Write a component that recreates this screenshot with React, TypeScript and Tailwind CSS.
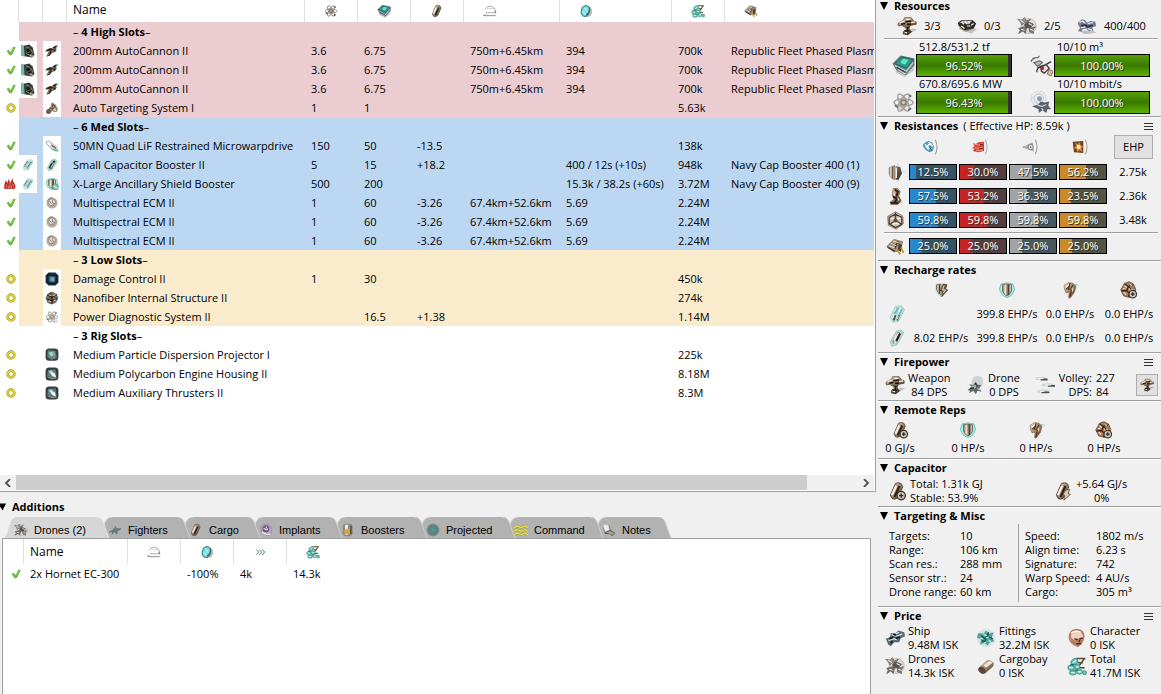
import React from "react";

type Art = Record<string, React.ReactNode>;

const atomArt = (
  <g fill="none" stroke="#8b8781" strokeWidth="1.5">
    <ellipse cx="12" cy="12" rx="10" ry="3.8" />
    <ellipse cx="12" cy="12" rx="10" ry="3.8" transform="rotate(60 12 12)" />
    <ellipse cx="12" cy="12" rx="10" ry="3.8" transform="rotate(120 12 12)" />
    <circle cx="12" cy="12" r="2.6" fill="#d9b999" stroke="#5c554d" />
    <path d="M3 15l3 2M18 4l2 2M17 20l3-2" stroke="#4a4744" strokeWidth="2" />
  </g>
);

const cellArt = (
  <g>
    <path d="M10 3q4-2 7 0l2 4-6 13q-4 3-7 1l-2-4z" fill="url(#bronze)" stroke="#4b4034" />
    <path d="M11 6L6 17" stroke="#f8efe2" strokeWidth="2.6" />
    <path d="M15 6L9 19" stroke="#2b221a" strokeWidth="2.6" />
  </g>
);

const plusBadge = (
  <g>
    <circle cx="17" cy="17.5" r="5" fill="#cfc6bb" stroke="#3c332b" strokeWidth="1.6" />
    <path d="M14.5 17.5h5M17 15v5" stroke="#2d2620" strokeWidth="1.6" />
  </g>
);

const droneArt = (
  <g stroke="#6b6866" fill="#918e8c" strokeWidth="1">
    <circle cx="14" cy="12" r="9" fill="#dedbd9" stroke="#b9b5b2" />
    <path d="M1 4l5 1 3-3 2 4 5-2-3 4-4 0-3 3-2-4z" />
    <path d="M9 10l4-3 7 3-3 3 1 3-5-2-3 2z" fill="#55524f" />
    <path d="M2 15l6-2 3 3-1 5-3-3-5 3 2-4z" fill="#6f6c69" />
    <path d="M15 15l7-2-3 4 1 4-5-2z" fill="#7b7875" />
    <path d="M4 5l4 3M14 9l4 2M5 16l4 1M16 16l3 1" stroke="#f2f0ee" strokeWidth="1.3" />
  </g>
);

const coinsArt = (
  <g>
    <path d="M11 3h10L13 14h8M13 8h6" fill="none" stroke="#554a35" strokeWidth="1.8" />
    <g fill="#5fc4b4" stroke="#3d8d82" strokeWidth="1">
      <ellipse cx="9" cy="7" rx="4.500" ry="3.600" transform="rotate(-35 9 7)" />
      <ellipse cx="5" cy="14" rx="4" ry="3.300" />
      <ellipse cx="12" cy="13" rx="3.400" ry="3" />
      <ellipse cx="7" cy="20" rx="4.200" ry="2.800" />
      <ellipse cx="15" cy="19" rx="3.600" ry="2.800" />
      <ellipse cx="21" cy="20" rx="2.400" ry="2.400" />
    </g>
    <path d="M7 8l4-3M3 14h4M5 20h4M13 19h4M11 13h3" stroke="#e5fffa" strokeWidth="1.4" />
    <path d="M4 11l4-1M9 17h4" stroke="#2a5a53" strokeWidth="1.6" />
  </g>
);

const turretArt = (
  <g>
    <path d="M11 18l8-3 5 1-8 5-8 1z" fill="#000" opacity=".2" />
    <path d="M10 11h6l-1 5 3 3-5 4-6-1 0-3 3-3z" fill="url(#dark)" />
    <path d="M2 8l6-3 1-3 8 0 3 4 3 1 0 3-6 1-3 3-6-1-2-2-4 1-1-2z" fill="url(#bronze)" stroke="#4a3a2b" strokeWidth=".8" />
    <path d="M3 8l6-2M11 4l5 0M17 8l5-1M10 16l3-1M9 19l3 1" stroke="#fff3df" strokeWidth="1.5" />
    <path d="M5 10l5-1M10 7l7-1M12 10l5 0M9 18l5 0M13 13l-1 4" stroke="#1d1712" strokeWidth="1.8" />
  </g>
);

const shieldArt = (
  <g>
    <path d="M4 4q8-3 16 0l2 7q-2 9-10 11-8-2-10-11z" fill="#a9ece8" stroke="#5fc3be" strokeWidth="1.2" />
    <path d="M6 5q6-2 12 0v8q-1 5-6 7-5-2-6-7z" fill="url(#stripes)" stroke="#6d5f4d" />
  </g>
);

const armorArt = (
  <g>
    <path d="M18 5q4-2 6 2" fill="none" stroke="#84cfd6" strokeWidth="1.300" />
    <path d="M4 6l6-4 6 1 4 4-2 8-6 8-2-1 1-7-4 1-2-4z" fill="url(#bronze)" stroke="#7d6448" strokeWidth=".8" />
    <path d="M6 7l5-3-1 6-3 1z" fill="#fbe9d0" />
    <path d="M12 3l-2 8 3 0M16 5l-3 5M14 12l-2 9M7 11l4-4" stroke="#4b3520" strokeWidth="1.5" fill="none" />
    <path d="M16 9l-1 5" stroke="#f3dcc0" strokeWidth="1.5" />
  </g>
);

const hullArt = (
  <g>
    <path d="M6 3l6-2 6 3 3 7-2 7-6 4-8-2-4-8z" fill="#a37f5f" stroke="#5f4632" strokeWidth="1" />
    <path d="M6 4l5 3 7-2M11 7l-2 6-7 0M9 13l4 4 7-4M13 17l-2 4M11 7l4 5" stroke="#3c291b" strokeWidth="1.7" fill="none" />
    <path d="M6 6l3 3M13 5l3 1M5 15l3 3M14 13l3-2M4 10l3 0M12 10l2 3" stroke="#f4d8b8" strokeWidth="1.6" />
  </g>
);

const artwork: Art = {
  check: (
    <>
      <path d="M2 12l4-3 5 6L18 2l5 1-9 18-5 1z" fill="#5aa726" stroke="#9fc68a" strokeWidth="1" />
      <path d="M5 12l6 6L20 4" fill="none" stroke="#86dc4a" strokeWidth="2" />
    </>
  ),
  ring: (
    <>
      <circle cx="12" cy="12" r="8" fill="none" stroke="#a39c28" strokeWidth="6.500" />
      <circle cx="12" cy="12" r="8" fill="none" stroke="#ddd53c" strokeWidth="3.600" />
    </>
  ),
  flame: (
    <>
      <path d="M1 22Q-1 13 4 4q1 4 3 6 1-6 3-9 0 6 3 9 1-6 4-9 0 5 4 10 4 7 0 11z" fill="#b6322b" />
      <path d="M5 21q-2-6 1-10 1 4 3 6 2-4 2-9 3 4 3 9 2-2 3-7 5 6 1 11z" fill="#e87763" />
      <path d="M7 21V14M12 21v-8M17 21v-7" stroke="#7a1c1a" strokeWidth="1.300" />
    </>
  ),
  charge: (
    <>
      <path d="M0 1l6 2v19l-6-2z" fill="#6fb9ac" />
      <path d="M5 3l9-2 6 5 3 13-4 4-13-2z" fill="#34362f" />
      <path d="M8 5l7 2M9 16l6 3 5-3M17 9l3 6" stroke="#8e8d76" strokeWidth="1.600" />
      <circle cx="12" cy="11" r="3.800" fill="#131713" stroke="#6e7b6b" />
      <path d="M15 20l7 1" stroke="#d9c8a5" strokeWidth="2" />
    </>
  ),
  cannon: (
    <>
      <path d="M1 11l7-4 6 0 3-4 6-1-4 5 1 3-3 4-5 1-4 5-6 2 3-6 2-3-6 0z" fill="#6a5d50" />
      <path d="M3 11l10-2 5-5M9 14l9-3M6 20l5-6" stroke="#241d17" strokeWidth="2.400" />
      <path d="M11 8l4 0M11 13l4-1M5 19l2-2" stroke="#c4b6a4" strokeWidth="1.400" />
    </>
  ),
  targeter: (
    <>
      <path d="M12 2l6 4 4 7-2 5-6-2-6 6-6-1 3-7 5-5z" fill="#a48a74" />
      <circle cx="6" cy="18" r="3.500" fill="#76614f" stroke="#40332a" />
      <circle cx="17" cy="15" r="3.500" fill="#dcc9b5" stroke="#574739" />
      <path d="M12 4l1 7M8 12l6 2M15 6l3 5" stroke="#4b3b2f" strokeWidth="1.600" />
    </>
  ),
  mwd: (
    <>
      <path d="M1 5q4-5 10 0l9 6q4 6 0 9-8 2-13-5z" fill="#dedbd6" />
      <ellipse cx="7" cy="8" rx="5" ry="3.500" transform="rotate(40 7 8)" fill="#fff" stroke="#8b827a" />
      <path d="M9 15q7 4 12 2l3 4q-10 2-15-6z" fill="#58c4c7" />
      <path d="M12 11l7 5" stroke="#6d6964" strokeWidth="2.400" />
    </>
  ),
  capCharge: (
    <>
      <path d="M3 14L11 2h8l3 5-9 14-8 1z" fill="#bde5e1" />
      <path d="M6 15l6-9M11 18l7-11" stroke="#5e7f7c" strokeWidth="3.400" />
      <path d="M7 15l5-8M12 18l6-9" stroke="#f0fcfb" strokeWidth="1.300" />
      <path d="M5 12l8 4M9 6l9 4" stroke="#8fc5c0" strokeWidth="1.400" />
    </>
  ),
  capBooster: (
    <>
      <path d="M3 17L11 2l7-1 4 5-9 15-7 2z" fill="#a1dad4" />
      <path d="M6 17l7-13 5 1-7 14z" fill="#322d28" />
      <path d="M11 9l3-5M10 17l5-9" stroke="#e9e4dc" strokeWidth="1.600" />
    </>
  ),
  shieldBooster: (
    <>
      {shieldArt}
      <circle cx="18" cy="17" r="5" fill="#7dc9c0" stroke="#407b74" />
      <path d="M15 15l6 4" stroke="#fff" strokeWidth="1.500" />
    </>
  ),
  ecm: (
    <>
      <circle cx="12" cy="12" r="9.500" fill="#b5aea7" />
      <circle cx="12" cy="11" r="6" fill="#e8e2da" stroke="#8c8379" strokeWidth="1.400" />
      <path d="M8 9l3 4M13 7v5l4 1M10 16l5-1M4 8q3-6 9-5" stroke="#7e756c" fill="none" strokeWidth="1.500" />
    </>
  ),
  damageControl: (
    <>
      <path d="M6 1h12l5 5v12l-5 5H6l-5-5V6z" fill="#1d2b3c" />
      <path d="M5 5l14 1v13H5z" fill="#31566d" stroke="#0d1620" strokeWidth="2" />
      <path d="M9 9h7v7H9z" fill="#63aab4" />
    </>
  ),
  nanofiber: (
    <>
      <path d="M12 1l8 4 3 7-4 8-8 3-7-3-3-8 3-7z" fill="#776b61" />
      <path d="M4 7l8 4 8-5M12 11v11M4 14l8 3 9-4M8 3l4 8" stroke="#271e19" strokeWidth="2" fill="none" />
      <path d="M7 7l4 1M14 8l4-2M6 17l4 1M15 17l3-2" stroke="#e0d0c1" strokeWidth="1.800" />
    </>
  ),
  powerDiag: (
    <g opacity=".8">
      {atomArt}
      <path d="M6 2l12 18M19 14l3 7-7-2z" stroke="#c0bab4" fill="#f1eeeb" />
    </g>
  ),
  rigA: (
    <>
      <rect x="1" y="1" width="22" height="21" rx="6" fill="#3a4143" />
      <path d="M5 4l13 1 2 12-9 3-7-5z" fill="#4e8f8c" />
      <path d="M6 8l8-2 3 5-6 4z" fill="#9bd6ce" />
      <path d="M8 15l8-1M13 5l3 11" stroke="#c27c58" strokeWidth="1.500" />
    </>
  ),
  rigB: (
    <>
      <rect x="1" y="1" width="22" height="22" rx="6" fill="#363b3e" />
      <path d="M5 5l13-1 2 14-10 1-6-4z" fill="#65797d" />
      <path d="M6 7q8-4 10 8l-5-1z" fill="#8ce0dc" />
      <path d="M9 8l8 3 2 7-6-2z" fill="#f5f7f6" />
      <path d="M4 17l8 3 8-1" stroke="#a6a8a8" strokeWidth="1.500" fill="none" />
    </>
  ),
  atom: atomArt,
  atomFaint: (
    <g opacity=".75">
      <path d="M4 17l5-3 6 6-6 2z" fill="#d9cdc0" />
      {atomArt}
    </g>
  ),
  cpu: (
    <>
      <path d="M4 17l9 6 10-9v3l-10 7-9-5z" fill="#000" opacity=".2" />
      <path d="M1 10L9 2l14 3 0 7-9 10-9-5z" fill="#6e8486" stroke="#566769" strokeWidth=".8" />
      <path d="M3 10l7-7 12 3-7 9z" fill="#2e9a8b" stroke="#1c5c55" />
      <path d="M9 8l3-3 5 1-3 5-4-1z" fill="#5fe6cb" />
      <path d="M3 12l12 6 7-9M6 16l8 5" stroke="#c4d2d2" strokeWidth="1.300" fill="none" />
      <path d="M5 14l9 5" stroke="#384648" strokeWidth="1.300" />
    </>
  ),
  cell: cellArt,
  range: (
    <g fill="none" strokeWidth="1.500">
      <path d="M3 9Q7 3 13 4q8 0 9 11H5" stroke="#9aa09f" />
      <path d="M7 8h12" stroke="#c8cccb" />
      <path d="M1 20h21M4 17l-3 3" stroke="#7b8281" />
      <path d="M20 12l2 4" stroke="#6b7271" />
    </g>
  ),
  clock: (
    <>
      <ellipse cx="15" cy="13" rx="7.500" ry="9" fill="#b9b9b7" />
      <ellipse cx="11" cy="12" rx="8" ry="10.500" transform="rotate(18 11 12)" fill="#3e8e92" />
      <ellipse cx="11" cy="12" rx="6" ry="8.500" transform="rotate(18 11 12)" fill="#74e0e0" />
      <path d="M8 6q5 1 6 8M6 13q4 1 5 6" stroke="#d4ffff" strokeWidth="1.500" fill="none" />
      <path d="M12 19q7-4 6-13" stroke="#4a5a5b" strokeWidth="2" fill="none" />
    </>
  ),
  speed: (
    <g fill="none" strokeWidth="1.800">
      <path d="M6 8l4 4-4 5M11 8l4 4-4 5" stroke="#8b9496" />
      <path d="M16 8l4 4-4 5" stroke="#5c9ea1" />
    </g>
  ),
  coins: coinsArt,
  ammo: (
    <>
      <path d="M1 12L10 3l11 3-3 11-8 2z" fill="#a09077" stroke="#6b5c4b" strokeWidth=".8" />
      <path d="M2 13l9 5M11 15l4-10M6 8l8 3" stroke="#372e25" strokeWidth="1.600" fill="none" />
      <path d="M6 8l7 3M4 11l7 3M9 5l6 2" stroke="#eee2ca" strokeWidth="1.300" />
      <path d="M16 8l4 2-1 9-4-3z" fill="#4a4035" />
      <path d="M14 16l4 6M19 13l3 7" stroke="#c2972c" strokeWidth="2.200" />
    </>
  ),
  turret: turretArt,
  launcher: (
    <>
      <path d="M6 18l12 3 6-5-5-2z" fill="#000" opacity=".18" />
      <path d="M2 15l9 4 8-3v-3l-9-1z" fill="#9c8d70" />
      <path d="M1 8l4-3 14 0 4 4-3 6-11 2-7-5z" fill="#2e2b27" />
      <path d="M3 8l3-2 12 0-4 4z" fill="#b9b4ab" />
      <path d="M6 7l2 3M10 6l2 4M14 6l1 3M17 11l3-2M5 12l4 3M12 12l4 0" stroke="#f8f4e8" strokeWidth="1.400" />
    </>
  ),
  drones: droneArt,
  calibration: (
    <>
      <path d="M3 18l16-1 4 3-14 2z" fill="#000" opacity=".2" />
      <path d="M1 8l5-4 4 1 2 3 4-2 6 1 1 5-5 2 2 3-6 1-3-3-4 1-2 3-4-1 3-4-2-2z" fill="#767c8c" />
      <path d="M3 8l4-2 3 3M13 9l6-1M5 14l5-1M13 15l5 2" stroke="#e6e9f2" strokeWidth="1.500" fill="none" />
      <path d="M8 10l5 3 6-2M5 11l3 1" stroke="#2d303b" strokeWidth="2" fill="none" />
    </>
  ),
  droneBay: (
    <>
      <path d="M1 8q2-5 7-4l2-2M4 9l6-2 3 2-5 4z" fill="#bab9b6" stroke="#6f6e6b" strokeWidth="1.300" />
      <path d="M7 19q0-6 6-6l9-5M11 13l6-2 3 4-5 5-3-2z" fill="#e4e2df" stroke="#3d3b39" strokeWidth="1.400" />
      <circle cx="13" cy="15" r="1.800" fill="#d01e1e" />
      <path d="M18 21l2-5 4 2-2 5z" fill="#d8bfa2" stroke="#8a6c50" />
    </>
  ),
  bandwidth: (
    <>
      <circle cx="9" cy="8" r="8" fill="#e9ecef" stroke="#d0d5da" />
      <circle cx="9" cy="8" r="5" fill="none" stroke="#b9c1cb" />
      <circle cx="10" cy="8" r="2.600" fill="#8a99ad" />
      <path d="M2 16l7-2 2-3 4 1 5-1-1 4 3 4-4 0-1 4-4-3-4 3 0-4z" fill="#5a616a" />
      <path d="M8 15l5 1 4-2M12 18l2 2" stroke="#cdd3da" strokeWidth="1.200" fill="none" />
    </>
  ),
  em: (
    <>
      <path d="M20 1q5 11 0 22" fill="none" stroke="#9b9b9b" strokeWidth="1.600" />
      <path d="M1 10q3-6 9-7l5 2 3 7-2 6-5 2-6-4z" fill="#5b9cb5" />
      <path d="M5 8l5 8M13 6l-6 6 8 3M10 5l6 6" stroke="#f6ffff" strokeWidth="2.200" fill="none" />
      <path d="M11 12l4 5" stroke="#235f78" strokeWidth="2" />
    </>
  ),
  thermal: (
    <>
      <path d="M20 1q5 11 0 22" fill="none" stroke="#b7aaa8" strokeWidth="1.600" />
      <path d="M1 6q6 3 8-1l9-1v14l-8 2-9-2 3-3-4-2 4-2z" fill="#cf4231" />
      <path d="M4 8q6 3 12-1M4 13q6 2 12-1M6 17h10" stroke="#ffb29a" strokeWidth="1.300" fill="none" />
      <path d="M12 8l5 1M11 14l5 0" stroke="#7e1d18" strokeWidth="1.500" />
    </>
  ),
  kinetic: (
    <>
      <path d="M20 1q5 11 0 22" fill="none" stroke="#9b9b9b" strokeWidth="1.600" />
      <path d="M1 11q5 0 8-3l7-3 2 14-8-3q-5-2-9-3z" fill="#a9acaa" />
      <circle cx="13" cy="12" r="3.800" fill="#eceeed" stroke="#6e7270" strokeWidth="1.300" />
      <circle cx="13" cy="12" r="1.300" fill="#555" />
    </>
  ),
  explosive: (
    <>
      <path d="M20 1q5 11 0 22" fill="none" stroke="#aaa29a" strokeWidth="1.600" />
      <path d="M1 4l16-1v18l-14-1z" fill="#6c4328" />
      <path d="M5 5l3 3 4-3 1 5 4 1-3 3 2 5-5-2-3 3-1-5-4-1 3-3z" fill="#e88938" />
      <circle cx="10" cy="12" r="3" fill="#fff3c8" />
    </>
  ),
  shieldRes: (
    <>
      <path d="M15 0v24M5 11h19" stroke="#cfc8bf" strokeWidth="1" />
      <path d="M4 6l7-3v18q-6-1-7-8z" fill="url(#stripes)" stroke="#8d7b66" strokeWidth=".8" />
      <path d="M12 4l6 1 2 8-4 8-4 0z" fill="url(#dark)" />
      <path d="M13 6v13" stroke="#fff" strokeWidth="1.500" />
    </>
  ),
  armorRes: (
    <>
      <path d="M14 17l8 2-6 3z" fill="#000" opacity=".15" />
      <path d="M9 2l6 0 3 4-2 5 3 6-4 5-9 0-1-3 5-3-2-6z" fill="url(#bronze)" stroke="#6b543e" strokeWidth=".8" />
      <path d="M11 3l4 3-2 6M9 12l5 3-3 4M6 20l9 0" stroke="#2c1d12" strokeWidth="2.400" fill="none" />
      <path d="M10 7l1 4M15 14l1 3" stroke="#f5e5d0" strokeWidth="1.600" />
    </>
  ),
  hullRes: (
    <>
      <path d="M12 1l9 5 1 10-9 7-10-5-1-11z" fill="#cfc3b2" stroke="#857767" strokeWidth="1" />
      <path d="M12 2v10M12 12l-8 5M12 12l8 5M4 8l8-4 8 4M5 17l7 4 8-4M4 8v9M20 8v9" stroke="#4c4137" strokeWidth="1.700" fill="none" />
      <path d="M7 9l3 1M14 10l4-1M9 17l3-2M13 15l3 2" stroke="#fff8ec" strokeWidth="1.800" />
      <circle cx="12" cy="12" r="2.600" fill="#5c4f42" />
    </>
  ),
  shieldPassive: (
    <>
      <path d="M4 4q8-3 15 0v9q-2 6-8 9-6-3-7-10z" fill="#cdeeed" />
      <path d="M6 5l6-1v15q-5-3-6-8z" fill="url(#stripes)" stroke="#6d5f4d" />
      <path d="M15 4l5 1-2 6 3 1-8 9 1-7-3-1z" fill="#69553e" stroke="#3a2b1c" strokeWidth=".8" />
      <path d="M16 6l-2 6 4 0-3 4" fill="none" stroke="#f3e7d5" strokeWidth="1.300" />
    </>
  ),
  shieldActive: shieldArt,
  armorActive: armorArt,
  hullActive: (
    <g>
      {hullArt}
      {plusBadge}
    </g>
  ),
  burst: (
    <>
      <path d="M3 16L10 2l8-1 4 5-8 16-8 1z" fill="#b9e6e2" stroke="#8ccac6" strokeWidth="1" />
      <path d="M7 11l4-8 4 1-4 8zM14 12l4-8 2 2-4 8z" fill="#7fb9b5" />
      <path d="M6 20l3-7 2 1-2 7zM11 20l3-7 2 1-3 7z" fill="#5e4a40" />
      <path d="M8 9l3-5M14 10l3-6M6 18l2-4M12 19l2-4" stroke="#fff" strokeWidth="1.200" />
    </>
  ),
  sustained: (
    <>
      <path d="M3 17L11 3l6-2 4 4-9 16-7 2z" fill="#b4dcd9" stroke="#8fbfbc" strokeWidth="1" />
      <path d="M6 16l7-12 5 1-7 14-4 1z" fill="url(#stripes)" />
      <path d="M11 16l5-10" stroke="#2c2521" strokeWidth="3" />
      <path d="M8 16l6-11" stroke="#f6f0ea" strokeWidth="1.600" />
    </>
  ),
  volley: (
    <g fill="none" strokeLinecap="round">
      <path d="M3 5q6-1 9 0M10 12q6-1 11 0M5 19q6-1 10 0" stroke="#ccd6d5" strokeWidth="3" />
      <path d="M8 6h6M16 13h6M9 20h7" stroke="#4a5151" strokeWidth="2" />
      <path d="M5 5h5M13 12h5M7 19h4" stroke="#fff" strokeWidth="1" />
    </g>
  ),
  droneDps: (
    <>
      <circle cx="15" cy="8" r="7" fill="#cfd2d2" />
      <path d="M3 18l5-4-3-3 5 1 3-4 2 4 5 0-3 4 3 4-5-1-2 4-3-4-5 3 1-3z" fill="#63686a" />
      <path d="M8 14l7-2M10 17l3-3M15 16l3 2" stroke="#bcd0d0" strokeWidth="1.300" />
      <path d="M6 16l5 0M12 10l3 3" stroke="#2a2f31" strokeWidth="1.600" />
    </>
  ),
  capTransfer: (
    <g>
      {cellArt}
      {plusBadge}
    </g>
  ),
  capDrain: (
    <g>
      {cellArt}
      <path d="M15 11l5-1-2 5 3 1-8 7 1-6-2-1z" fill="#d6cab9" stroke="#5a4b3b" />
    </g>
  ),
  ship: (
    <>
      <path d="M1 13l5-2 1-5 5 1 4-4 7 2 1 5-5 2-2 5-6 0-4 5-3-2z" fill="#57676c" />
      <path d="M8 8l6 2 7-3M4 15l6-2 4 1M13 7l4-2" stroke="#c3e6e8" strokeWidth="1.700" fill="none" />
      <path d="M5 13l5-2M13 12l5-1M7 18l2-2M10 7l3 2" stroke="#141c20" strokeWidth="2.200" />
    </>
  ),
  fittings: (
    <>
      <circle cx="12" cy="12" r="11" fill="#dbe3e0" />
      <path d="M3 6l6 1 3-4 3 4 6-2-2 6 3 5-5 1-3 4-4-3-5 2 1-6-5-3z" fill="#4fa59b" />
      <path d="M6 9l5 4M14 7l-4 11M16 11l4 2M7 15l4 2M15 5l-1 5" stroke="#17574f" strokeWidth="1.800" />
      <path d="M9 8l4 1M15 15l3 1M5 12l3 1M12 12l3-1M10 18l2-1" stroke="#c5fff5" strokeWidth="1.500" />
    </>
  ),
  character: (
    <>
      <path d="M2 11q0-9 9-10 10 0 10 9 0 5-3 9l-5 4-6-3Q2 16 2 11z" fill="#b97f66" />
      <path d="M5 7q5-6 12-2 3 4 2 8l-4-1-5 3-5-3z" fill="#efd3c2" />
      <path d="M9 13l4 1M15 13l4-1M11 19h6M15 14v3" stroke="#58301f" strokeWidth="1.800" />
      <path d="M5 6q5-4 11-1" stroke="#fff" strokeWidth="1.500" fill="none" />
    </>
  ),
  cargo: (
    <>
      <path d="M3 14l10-9q5-1 8 3 1 3-1 5l-9 8q-4 1-7-2-2-2-1-5z" fill="url(#bronze)" />
      <ellipse cx="7" cy="17" rx="3.600" ry="4.600" transform="rotate(-40 7 17)" fill="#54473a" />
      <path d="M9 11l7-5q3 0 4 2l-8 6" fill="#ece3d5" />
    </>
  ),
  fighter: (
    <>
      <path d="M2 16l7-4 3-6 3 4 7 0-6 4-1 5-4-4-4 4 1-5z" fill="#63817f" stroke="#4b605e" />
      <path d="M4 8l5 4M17 16l4 3M9 4l3 5" stroke="#8eb9b5" strokeWidth="1.600" />
    </>
  ),
  implant: (
    <>
      <path d="M3 10q0-8 10-8 9 1 9 10l-2 8-7 2-2-4-6-1z" fill="#b7a8bd" stroke="#8d7e92" />
      <circle cx="12" cy="10" r="6" fill="#765585" />
      <path d="M8 9l5 3M12 6l3 6" stroke="#ead8f0" strokeWidth="1.800" />
      <path d="M5 16l9 4 6-1" stroke="#faf7fb" strokeWidth="1.800" fill="none" />
    </>
  ),
  boosterPill: (
    <>
      <path d="M3 6q0-5 7-5h4q5 0 6 4v14q-2 4-9 4-7 0-8-4z" fill="#8d8a83" />
      <path d="M7 3h5v17H7z" fill="#f0eee8" />
      <path d="M6 10h9v9H6z" fill="#dfa73a" />
      <path d="M17 5v14" stroke="#4b473f" strokeWidth="2.400" />
    </>
  ),
  projected: (
    <>
      <circle cx="12" cy="12" r="11" fill="#7d8888" />
      <circle cx="12" cy="12" r="7.500" fill="#4c8785" stroke="#47696a" />
      <path d="M2 12h20M12 2v20M6 6l12 12M18 6L6 18" stroke="#679c99" strokeWidth="1" />
    </>
  ),
  command: (
    <g fill="none">
      <path d="M0 9l5-4 7 3 7-3 5 4M0 15l5-4 7 3 7-3 5 4M0 21l5-4 7 3 7-3 5 4" stroke="#8d8733" strokeWidth="3.600" />
      <path d="M0 9l5-4 7 3 7-3 5 4M0 15l5-4 7 3 7-3 5 4M0 21l5-4 7 3 7-3 5 4" stroke="#e8df48" strokeWidth="2.400" />
    </g>
  ),
  notes: (
    <>
      <path d="M3 4l9-1 3 9 8 5-5 5-12-1-3-8z" fill="#625c57" />
      <path d="M2 3l9 0 2 9-8 3z" fill="#f1ece5" stroke="#c3bbb1" />
      <path d="M7 16l8-2 7 4-6 2z" fill="#a7a29c" />
      <path d="M6 20l9 1" stroke="#f4f4f4" strokeWidth="1.500" />
    </>
  ),
};

function Icon({ name, className = "size-4" }: { name: string; className?: string }) {
  return (
    <svg viewBox="0 0 24 24" className={`${className} shrink-0`} aria-hidden="true">
      {artwork[name]}
    </svg>
  );
}

function SharedGradients() {
  return (
    <svg className="absolute size-0" aria-hidden="true">
      <defs>
        <linearGradient id="bronze" x1="0" y1="0" x2="1" y2="1">
          <stop offset="0" stopColor="#f3e9db" />
          <stop offset=".45" stopColor="#a58a6c" />
          <stop offset="1" stopColor="#3d2f23" />
        </linearGradient>
        <linearGradient id="dark" x1="0" y1="0" x2="1" y2="1">
          <stop offset="0" stopColor="#8a7b69" />
          <stop offset="1" stopColor="#2a221b" />
        </linearGradient>
        <linearGradient id="stripes">
          <stop offset="0" stopColor="#6d5b47" />
          <stop offset=".3" stopColor="#f4ece0" />
          <stop offset=".5" stopColor="#a08a70" />
          <stop offset=".7" stopColor="#3e342a" />
          <stop offset=".85" stopColor="#e9dcc9" />
          <stop offset="1" stopColor="#6d5b47" />
        </linearGradient>
      </defs>
    </svg>
  );
}

type Row = {
  state: string;
  charge?: string;
  icon: string;
  name: string;
  pg?: string;
  cpu?: string;
  cap?: string;
  range?: string;
  time?: string;
  price?: string;
  ammo?: string;
};

const gun: Row = {
  state: "check", charge: "charge", icon: "cannon", name: "200mm AutoCannon II", pg: "3.6", cpu: "6.75",
  range: "750m+6.45km", time: "394", price: "700k", ammo: "Republic Fleet Phased Plasma S",
};
const jammer: Row = {
  state: "check", icon: "ecm", name: "Multispectral ECM II", pg: "1", cpu: "60", cap: "-3.26",
  range: "67.4km+52.6km", time: "5.69", price: "2.24M",
};

const racks: { title: string; tint: string; rows: Row[] }[] = [
  {
    title: "4 High Slots",
    tint: "bg-[#ebccd1]",
    rows: [gun, gun, gun, { state: "ring", icon: "targeter", name: "Auto Targeting System I", pg: "1", cpu: "1", price: "5.63k" }],
  },
  {
    title: "6 Med Slots",
    tint: "bg-[#bcd7f1]",
    rows: [
      { state: "check", icon: "mwd", name: "50MN Quad LiF Restrained Microwarpdrive", pg: "150", cpu: "50", cap: "-13.5", price: "138k" },
      { state: "check", charge: "capCharge", icon: "capBooster", name: "Small Capacitor Booster II", pg: "5", cpu: "15", cap: "+18.2", time: "400 / 12s (+10s)", price: "948k", ammo: "Navy Cap Booster 400 (1)" },
      { state: "flame", charge: "capCharge", icon: "shieldBooster", name: "X-Large Ancillary Shield Booster", pg: "500", cpu: "200", time: "15.3k / 38.2s (+60s)", price: "3.72M", ammo: "Navy Cap Booster 400 (9)" },
      jammer,
      jammer,
      jammer,
    ],
  },
  {
    title: "3 Low Slots",
    tint: "bg-[#faebcc]",
    rows: [
      { state: "ring", icon: "damageControl", name: "Damage Control II", pg: "1", cpu: "30", price: "450k" },
      { state: "ring", icon: "nanofiber", name: "Nanofiber Internal Structure II", price: "274k" },
      { state: "ring", icon: "powerDiag", name: "Power Diagnostic System II", cpu: "16.5", cap: "+1.38", price: "1.14M" },
    ],
  },
  {
    title: "3 Rig Slots",
    tint: "bg-white",
    rows: [
      { state: "ring", icon: "rigA", name: "Medium Particle Dispersion Projector I", price: "225k" },
      { state: "ring", icon: "rigB", name: "Medium Polycarbon Engine Housing II", price: "8.18M" },
      { state: "ring", icon: "rigB", name: "Medium Auxiliary Thrusters II", price: "8.3M" },
    ],
  },
];

function HeadIcon({ name, label, last = false }: { name: string; label: string; last?: boolean }) {
  return (
    <th scope="col" aria-label={label} className={last ? "p-0 pl-[19px]" : "border-r border-[#e0e0e0] p-0 pl-[19px]"}>
      <Icon name={name} className="size-[14px]" />
    </th>
  );
}

function IconTile({ name }: { name?: string }) {
  return (
    <td className="p-0">
      {name && (
        <span className="flex h-[19px] w-[18px] items-center justify-center bg-white">
          <Icon name={name} className="size-[14px]" />
        </span>
      )}
    </td>
  );
}

function Cell({ children }: { children?: React.ReactNode }) {
  return <td className="overflow-hidden p-0 pl-1.5">{children}</td>;
}

function FittingTable() {
  return (
    <table className="w-full table-fixed border-separate border-spacing-0 text-left whitespace-nowrap">
      <colgroup>
        <col className="w-[19px]" />
        <col className="w-6" />
        <col className="w-6" />
        <col className="w-[238px]" />
        <col className="w-[53px]" />
        <col className="w-[53px]" />
        <col className="w-[53px]" />
        <col className="w-24" />
        <col className="w-28" />
        <col className="w-[53px]" />
        <col />
      </colgroup>
      <thead>
        <tr className="h-[22px]">
          <th className="border-r border-[#e0e0e0] p-0" />
          <th className="border-r border-[#e0e0e0] p-0" />
          <th className="border-r border-[#e0e0e0] p-0" />
          <th scope="col" className="border-r border-[#e0e0e0] p-0 pb-0.5 pl-1.5 text-[12px] font-normal">Name</th>
          <HeadIcon name="atom" label="Powergrid" />
          <HeadIcon name="cpu" label="CPU" />
          <HeadIcon name="cell" label="Capacitor" />
          <HeadIcon name="range" label="Range" />
          <HeadIcon name="clock" label="Duration" />
          <HeadIcon name="coins" label="Price" />
          <HeadIcon name="ammo" label="Charge" last />
        </tr>
      </thead>
      {racks.map((rack) => (
        <tbody key={rack.title}>
          <tr className={`${rack.tint} h-[19px]`}>
            <td className="bg-white p-0" />
            <td className="p-0" />
            <td className="p-0" />
            <th scope="rowgroup" colSpan={8} className="p-0 pl-1.5 font-normal">
              – <b>{rack.title}</b>–
            </th>
          </tr>
          {rack.rows.map((row, i) => (
            <tr key={i} className={`${rack.tint} h-[19px]`}>
              <td className="bg-white p-0">
                <Icon name={row.state} className={row.state === "flame" ? "ml-1 size-3" : "ml-1.5 size-[10px]"} />
              </td>
              <IconTile name={row.charge} />
              <IconTile name={row.icon} />
              <Cell>{row.name}</Cell>
              <Cell>{row.pg}</Cell>
              <Cell>{row.cpu}</Cell>
              <Cell>{row.cap}</Cell>
              <Cell>{row.range}</Cell>
              <Cell>{row.time}</Cell>
              <Cell>{row.price}</Cell>
              <Cell>{row.ammo}</Cell>
            </tr>
          ))}
        </tbody>
      ))}
    </table>
  );
}

function ScrollBar() {
  return (
    <div className="flex h-[15px] bg-[#f0f0f0]">
      <button aria-label="Scroll left" className="flex w-4 items-center justify-center">
        <svg viewBox="0 0 8 8" className="size-2" fill="none" stroke="#505050" strokeWidth="1.800"><path d="M6 0L2 4l4 4" /></svg>
      </button>
      <div className="flex-1">
        <div className="h-full w-[94%] bg-[#cdcdcd]" />
      </div>
      <button aria-label="Scroll right" className="flex w-4 items-center justify-center">
        <svg viewBox="0 0 8 8" className="size-2" fill="none" stroke="#505050" strokeWidth="1.800"><path d="M2 0l4 4-4 4" /></svg>
      </button>
    </div>
  );
}

const tabs = [
  { label: "Drones (2)", icon: "drones", width: "w-[105px]" },
  { label: "Fighters", icon: "fighter", width: "w-[92px]" },
  { label: "Cargo", icon: "cell", width: "w-[81px]" },
  { label: "Implants", icon: "implant", width: "w-[93px]" },
  { label: "Boosters", icon: "boosterPill", width: "w-[96px]" },
  { label: "Projected", icon: "projected", width: "w-[99px]" },
  { label: "Command", icon: "command", width: "w-[99px]" },
  { label: "Notes", icon: "notes", width: "w-[79px]" },
];

function Tab({ label, icon, width, active, stack }: { label: string; icon: string; width: string; active: boolean; stack: number }) {
  return (
    <button
      role="tab"
      aria-selected={active}
      style={{ zIndex: stack }}
      className={`${width} relative -ml-[11px] flex h-[21px] ${active ? "text-[#d6d6d6]" : "text-[#b2b2b2]"}`}
    >
      <svg viewBox="0 0 14 21" className="h-[21px] w-[14px] shrink-0" aria-hidden="true">
        <path d="M0 21Q3 17 5 8 7 0 13 0h1v21z" fill="currentColor" />
        <path d="M0 21Q3 17 5 8 7 0 13 0" fill="none" stroke="#d8d8d8" />
      </svg>
      <span className="-ml-px flex h-[21px] flex-1 items-center gap-1.5 bg-current pt-1">
        <Icon name={icon} className="-ml-1 size-[14px]" />
        <span className="font-['Liberation_Sans',sans-serif] text-[11px] leading-4 text-black">{label}</span>
      </span>
      <svg viewBox="0 0 14 21" className="-ml-px h-[21px] w-[14px] shrink-0" aria-hidden="true">
        <path d="M0 0Q5 0 7 5l6 16H0z" fill="currentColor" />
        <path d="M0 0Q5 0 7 5l6 16" fill="none" stroke={active ? "#e2e2e2" : "#cccccc"} />
      </svg>
    </button>
  );
}

function Additions() {
  return (
    <section className="flex h-[202px] flex-col bg-[#f0f0f0]">
      <h2 className="flex h-[25px] items-center pt-1">
        <button className="flex items-center gap-1.5 font-bold">
          <svg viewBox="0 0 7 8" className="h-2 w-[6px]"><path d="M-2 0h9L3 8z" /></svg>
          Additions
        </button>
      </h2>
      <div role="tablist" className="isolate flex pl-4">
        {tabs.map((tab, i) => (
          <Tab key={tab.label} {...tab} active={i === 0} stack={tabs.length - i} />
        ))}
      </div>
      <div role="tabpanel" className="mr-[5px] ml-0.5 flex-1 border border-b-0 border-[#a0a0a0] bg-white">
        <table className="table-fixed border-separate border-spacing-0 text-left whitespace-nowrap">
          <colgroup>
            <col className="w-[21px]" />
            <col className="w-[104px]" />
            <col className="w-[53px]" />
            <col className="w-[53px]" />
            <col className="w-[53px]" />
            <col className="w-[53px]" />
          </colgroup>
          <thead>
            <tr className="h-[25px]">
              <th className="border-r border-[#e0e0e0] p-0" />
              <th scope="col" className="border-r border-[#e0e0e0] p-0 pl-1.5 text-[12px] font-normal">Name</th>
              <HeadIcon name="range" label="Range" />
              <HeadIcon name="clock" label="Duration" />
              <HeadIcon name="speed" label="Speed" />
              <HeadIcon name="coins" label="Price" last />
            </tr>
          </thead>
          <tbody>
            <tr className="h-[19px]">
              <td className="p-0 pl-2"><Icon name="check" className="size-[10px]" /></td>
              <Cell>2x Hornet EC-300</Cell>
              <Cell />
              <Cell>-100%</Cell>
              <Cell>4k</Cell>
              <Cell>14.3k</Cell>
            </tr>
          </tbody>
        </table>
      </div>
    </section>
  );
}

function Rule() {
  return <div className="h-0.5 border-t border-[#a0a0a0] bg-white" />;
}

function Section({ title, note, menu = false, first = false, children }: {
  title: string;
  note?: string;
  menu?: boolean;
  first?: boolean;
  children: React.ReactNode;
}) {
  return (
    <section>
      {!first && <Rule />}
      <h2 className={`flex items-center pr-2 pl-0.5 ${first ? "h-[14px] pb-0.5" : "h-4"}`}>
        <button className="flex items-center gap-1.5 font-bold">
          <svg viewBox="0 0 8 8" className="size-2"><path d="M0 0h8L4 8z" /></svg>
          {title}
        </button>
        {note && <span className="ml-[5px]">{note}</span>}
        {menu && (
          <button aria-label={`${title} options`} className="ml-auto">
            <svg viewBox="0 0 9 9" className="size-[9px]" stroke="#333" strokeWidth="1"><path d="M0 1.500h9M0 4.500h9M0 7.500h9" /></svg>
          </button>
        )}
      </h2>
      {children}
    </section>
  );
}

function Gauge({ icon, text, value, label }: { icon: string; text: string; value: number; label: string }) {
  return (
    <div className="flex w-[120px] items-end">
      <Icon name={icon} className="mr-px size-[23px]" />
      <div className="flex-1">
        <div className="h-[14px] pl-[3px] leading-[14px]">{text}</div>
        <div className="relative h-[23px] border border-black bg-[#333]" role="img" aria-label={`${text} ${label}`}>
          <div className="h-full bg-linear-to-b from-[#55a00a] via-[#3a7a00] to-[#5cb400]" style={{ width: `${value}%` }} />
          <span className="absolute inset-0 flex items-center justify-center text-white text-shadow-[1px_1px_0_#333]">{label}</span>
        </div>
      </div>
    </div>
  );
}

const resistTones = [
  { fill: "bg-[#2888cc]", rest: "bg-[#335463]" },
  { fill: "bg-[#c62525]", rest: "bg-[#553e40]" },
  { fill: "bg-[#a2a3a5]", rest: "bg-[#495a5e]" },
  { fill: "bg-[#c98a28]", rest: "bg-[#525443]" },
];

function ResistRow({ icon, values, total }: { icon: string; values: number[]; total?: string }) {
  return (
    <div className="flex h-6 items-center">
      <Icon name={icon} className="mr-1 ml-px size-[19px]" />
      <div className="flex gap-0.5">
        {values.map((v, i) => (
          <div key={i} className={`${resistTones[i].rest} relative h-4 w-12 border border-black`}>
            <div className={`${resistTones[i].fill} h-full`} style={{ width: `${v}%` }} />
            <span className="absolute inset-0 flex items-center justify-center text-white text-shadow-[1px_1px_0_#333]">{v.toFixed(1)}%</span>
          </div>
        ))}
      </div>
      <span className="flex-1 pl-1.5 text-center">{total}</span>
    </div>
  );
}

function Pair({ icon, top, bottom, center = false }: { icon: string; top: string; bottom: string; center?: boolean }) {
  return (
    <div className="flex items-center">
      <Icon name={icon} className="size-[22px] p-px" />
      <div className={`ml-0.5 leading-[14px] ${center ? "text-center" : ""}`}>
        <div>{top}</div>
        <div>{bottom}</div>
      </div>
    </div>
  );
}

function Facts({ rows }: { rows: [string, string][] }) {
  return (
    <dl className="grid grid-cols-[69px_1fr] leading-[14px] whitespace-nowrap">
      {rows.map(([k, v]) => (
        <React.Fragment key={k}>
          <dt>{k}</dt>
          <dd className="pl-0.5">{v}</dd>
        </React.Fragment>
      ))}
    </dl>
  );
}

function Sidebar() {
  const rates = "grid grid-cols-[22px_66px_66px_60px_58px] items-center justify-items-center pl-2";
  return (
    <aside className="w-[285px] shrink-0 bg-[#f0f0f0] pl-0.5 whitespace-nowrap">
      <Section title="Resources" first>
        <div className="flex h-6 items-center pl-[19px]">
          {[["turret", "3/3"], ["launcher", "0/3"], ["drones", "2/5"], ["calibration", "400/400"]].map(([icon, text]) => (
            <div key={icon} className="flex w-[60px] items-center gap-[7px]">
              <Icon name={icon} className="size-5" />
              {text}
            </div>
          ))}
        </div>
        <div className="mr-[3px] ml-1.5"><Rule /></div>
        <div className="grid grid-cols-[138px_120px] pb-0.5 pl-[14px]">
          <Gauge icon="cpu" text="512.8/531.2 tf" value={96.52} label="96.52%" />
          <Gauge icon="droneBay" text="10/10 m³" value={100} label="100.00%" />
          <Gauge icon="atomFaint" text="670.8/695.6 MW" value={96.43} label="96.43%" />
          <Gauge icon="bandwidth" text="10/10 mbit/s" value={100} label="100.00%" />
        </div>
      </Section>

      <Section title="Resistances" note="( Effective HP: 8.59k )" menu>
        <div className="pr-2 pl-[7px]">
          <div className="mb-px flex h-[25px] items-center pl-[24px]">
            {["em", "thermal", "kinetic", "explosive"].map((icon) => (
              <span key={icon} className="flex w-[50px] justify-center pr-2"><Icon name={icon} className="size-4" /></span>
            ))}
            <button className="ml-auto h-6 w-[39px] border border-[#adadad] bg-[#e1e1e1]">EHP</button>
          </div>
          <ResistRow icon="shieldRes" values={[12.5, 30, 47.5, 56.2]} total="2.75k" />
          <ResistRow icon="armorRes" values={[57.5, 53.2, 36.3, 23.5]} total="2.36k" />
          <ResistRow icon="hullRes" values={[59.8, 59.8, 59.8, 59.8]} total="3.48k" />
        </div>
        <div className="mr-[3px] ml-1.5"><Rule /></div>
        <div className="pr-2 pb-0.5 pl-[7px]">
          <ResistRow icon="ammo" values={[25, 25, 25, 25]} />
        </div>
      </Section>

      <Section title="Recharge rates">
        <div className={`${rates} h-6`}>
          <span />
          <Icon name="shieldPassive" className="size-[18px]" />
          <Icon name="shieldActive" className="size-[18px]" />
          <Icon name="armorActive" className="size-[18px]" />
          <Icon name="hullActive" className="size-[18px]" />
        </div>
        <div className={`${rates} h-6`}>
          <Icon name="burst" className="size-[18px]" />
          <span />
          <span>399.8 EHP/s</span>
          <span>0.0 EHP/s</span>
          <span>0.0 EHP/s</span>
        </div>
        <div className={`${rates} mb-0.5 h-6`}>
          <Icon name="sustained" className="size-[18px]" />
          <span>8.02 EHP/s</span>
          <span>399.8 EHP/s</span>
          <span>0.0 EHP/s</span>
          <span>0.0 EHP/s</span>
        </div>
      </Section>

      <Section title="Firepower" menu>
        <div className="flex h-[30px] items-center pr-[3px] pl-1.5">
          <div className="w-20"><Pair icon="turret" top="Weapon" bottom="84 DPS" center /></div>
          <div className="w-[70px]"><Pair icon="droneDps" top="Drone" bottom="0 DPS" center /></div>
          <Icon name="volley" className="size-[22px]" />
          <dl className="grid grid-cols-[36px_1fr] gap-x-1 leading-[14px]">
            <dt className="text-right">Volley:</dt><dd>227</dd>
            <dt className="text-right">DPS:</dt><dd>84</dd>
          </dl>
          <button aria-label="Firepower mode" className="ml-auto flex size-[22px] items-center justify-center border border-[#adadad] bg-[#e1e1e1]">
            <Icon name="turret" className="size-[14px]" />
          </button>
        </div>
      </Section>

      <Section title="Remote Reps">
        <div className="flex h-10">
          {[["capTransfer", "0 GJ/s"], ["shieldActive", "0 HP/s"], ["armorActive", "0 HP/s"], ["hullActive", "0 HP/s"]].map(([icon, text]) => (
            <div key={icon} className="flex w-[68px] flex-col items-center pt-[3px] pr-6 leading-[14px]">
              <Icon name={icon} className="mb-0.5 size-[18px]" />
              {text}
            </div>
          ))}
        </div>
      </Section>

      <Section title="Capacitor">
        <div className="flex h-[30px] items-center pl-2">
          <div className="w-[166px]"><Pair icon="capTransfer" top="Total: 1.31k GJ" bottom="Stable: 53.9%" /></div>
          <Pair icon="capDrain" top="+5.64 GJ/s" bottom="0%" center />
        </div>
      </Section>

      <Section title="Targeting & Misc">
        <div className="grid grid-cols-[141px_1fr] pb-1">
          <div className="border-r border-[#a0a0a0] pt-[5px] pb-[3px] pl-[11px]">
            <Facts rows={[["Targets:", "10"], ["Range:", "106 km"], ["Scan res.:", "288 mm"], ["Sensor str.:", "24"], ["Drone range:", "60 km"]]} />
          </div>
          <div className="pt-[5px] pb-[3px] pl-1.5">
            <Facts rows={[["Speed:", "1802 m/s"], ["Align time:", "6.23 s"], ["Signature:", "742"], ["Warp Speed:", "4 AU/s"], ["Cargo:", "305 m³"]]} />
          </div>
        </div>
      </Section>

      <Section title="Price" menu>
        <div className="grid grid-cols-3 pr-1 pl-1.5">
          <Pair icon="ship" top="Ship" bottom="9.48M ISK" />
          <Pair icon="fittings" top="Fittings" bottom="32.2M ISK" />
          <Pair icon="character" top="Character" bottom="0 ISK" />
          <Pair icon="drones" top="Drones" bottom="14.3k ISK" />
          <Pair icon="cargo" top="Cargobay" bottom="0 ISK" />
          <Pair icon="coins" top="Total" bottom="41.7M ISK" />
        </div>
      </Section>
    </aside>
  );
}

export default function App() {
  return (
    <div className="flex min-h-screen bg-[#f0f0f0] font-['Open_Sans','Noto_Sans',sans-serif] text-[11px] leading-[16px] text-black">
      <SharedGradients />
      <main className="flex min-w-0 flex-1 flex-col">
        <section className="flex flex-1 flex-col border-r border-b border-[#a0a0a0] bg-white pr-px pb-px">
          <div className="flex-1">
            <FittingTable />
          </div>
          <ScrollBar />
        </section>
        <Additions />
      </main>
      <Sidebar />
    </div>
  );
}
